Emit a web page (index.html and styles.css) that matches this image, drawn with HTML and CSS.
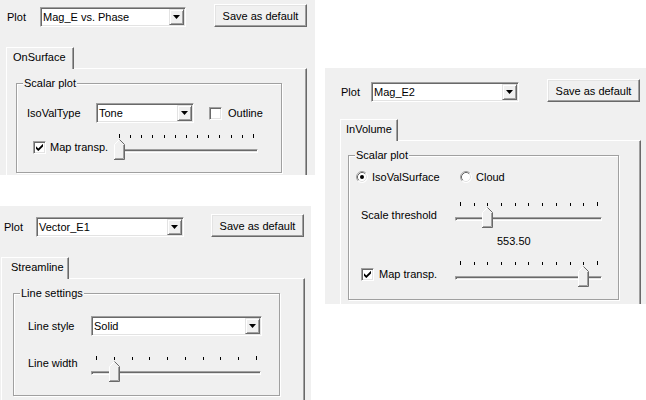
FILE: index.html
```html
<!DOCTYPE html>
<html lang="en">
<head>
<meta charset="utf-8">
<title>Plot settings</title>
<link rel="stylesheet" href="styles.css">
</head>
<body>
<main class="canvas">

  <section class="win win-a">
    <div class="header header-a">
      <span class="plot-label">Plot</span>
      <div class="combo combo-plot">
        <span class="combo-text">Mag_E vs. Phase</span>
        <span class="drop"><svg width="7" height="4" viewBox="0 0 7 4"><polygon points="0,0 7,0 3.5,4" fill="#000"/></svg></span>
      </div>
      <button class="btn">Save as default</button>
    </div>
    <div class="tab tab-a">OnSurface</div>
    <div class="pane pane-a">
      <fieldset class="group group-a">
        <legend>Scalar plot</legend>
        <div class="row row-a1">
          <span class="lbl lbl-iso">IsoValType</span>
          <div class="combo combo-tone">
            <span class="combo-text">Tone</span>
            <span class="drop"><svg width="7" height="4" viewBox="0 0 7 4"><polygon points="0,0 7,0 3.5,4" fill="#000"/></svg></span>
          </div>
          <span class="chk chk-outline"></span>
          <span class="chk-text">Outline</span>
        </div>
        <div class="row row-a2">
          <span class="chk"><svg width="7" height="7" viewBox="0 0 7 7"><polygon points="0,2.2 2.3,4.5 7,-0.2 7,2.4 2.3,7.1 0,4.8" fill="#000"/></svg></span>
          <span class="chk-text lbl-map-a">Map transp.</span>
          <div class="slider slider-a">
            <div class="ticks"><i></i><i></i><i></i><i></i><i></i><i></i><i></i><i></i><i></i><i></i><i></i><i></i><i></i></div>
            <div class="track"></div>
            <svg class="thumb" style="left:0px" width="11" height="21" viewBox="0 0 11 21"><polygon points="0.5,5.5 5.5,0.5 10.5,5.5 10.5,20.5 0.5,20.5" fill="#f0f0f0"/><path d="M0.5 20 V5.5 L5.5 0.5" stroke="#fff" fill="none"/><path d="M5.5 0.5 L10.5 5.5 V20.5 H0" stroke="#696969" fill="none"/><path d="M9.5 6 V19.5 H1" stroke="#a0a0a0" fill="none"/></svg>
          </div>
        </div>
      </fieldset>
    </div>
  </section>

  <section class="win win-b">
    <div class="header header-b">
      <span class="plot-label">Plot</span>
      <div class="combo combo-plot">
        <span class="combo-text">Mag_E2</span>
        <span class="drop"><svg width="7" height="4" viewBox="0 0 7 4"><polygon points="0,0 7,0 3.5,4" fill="#000"/></svg></span>
      </div>
      <button class="btn">Save as default</button>
    </div>
    <div class="tab tab-b">InVolume</div>
    <div class="pane pane-b">
      <fieldset class="group group-b">
        <legend>Scalar plot</legend>
        <div class="row row-b1">
          <span class="opt opt-iso">
            <svg class="radio" width="12" height="12" viewBox="0 0 12 12"><circle cx="6" cy="6" r="5.5" fill="#fff"/><path d="M2.11 9.89 A5.5 5.5 0 0 1 9.89 2.11" stroke="#a0a0a0" fill="none"/><path d="M9.89 2.11 A5.5 5.5 0 0 1 2.11 9.89" stroke="#fff" fill="none"/><path d="M2.82 9.18 A4.5 4.5 0 0 1 9.18 2.82" stroke="#696969" fill="none"/><path d="M9.18 2.82 A4.5 4.5 0 0 1 2.82 9.18" stroke="#e3e3e3" fill="none"/><circle cx="6" cy="6" r="2" fill="#000"/></svg>
            <span class="opt-text">IsoValSurface</span>
          </span>
          <span class="opt">
            <svg class="radio" width="12" height="12" viewBox="0 0 12 12"><circle cx="6" cy="6" r="5.5" fill="#fff"/><path d="M2.11 9.89 A5.5 5.5 0 0 1 9.89 2.11" stroke="#a0a0a0" fill="none"/><path d="M9.89 2.11 A5.5 5.5 0 0 1 2.11 9.89" stroke="#fff" fill="none"/><path d="M2.82 9.18 A4.5 4.5 0 0 1 9.18 2.82" stroke="#696969" fill="none"/><path d="M9.18 2.82 A4.5 4.5 0 0 1 2.82 9.18" stroke="#e3e3e3" fill="none"/></svg>
            <span class="opt-text">Cloud</span>
          </span>
        </div>
        <div class="row row-b2">
          <span class="lbl lbl-thr">Scale threshold</span>
          <div class="slider slider-b">
            <div class="ticks"><i></i><i></i><i></i><i></i><i></i><i></i><i></i><i></i><i></i><i></i><i></i></div>
            <div class="track"></div>
            <svg class="thumb" style="left:27px" width="11" height="21" viewBox="0 0 11 21"><polygon points="0.5,5.5 5.5,0.5 10.5,5.5 10.5,20.5 0.5,20.5" fill="#f0f0f0"/><path d="M0.5 20 V5.5 L5.5 0.5" stroke="#fff" fill="none"/><path d="M5.5 0.5 L10.5 5.5 V20.5 H0" stroke="#696969" fill="none"/><path d="M9.5 6 V19.5 H1" stroke="#a0a0a0" fill="none"/></svg>
          </div>
        </div>
        <div class="row row-b3">553.50</div>
        <div class="row row-b4">
          <span class="chk"><svg width="7" height="7" viewBox="0 0 7 7"><polygon points="0,2.2 2.3,4.5 7,-0.2 7,2.4 2.3,7.1 0,4.8" fill="#000"/></svg></span>
          <span class="chk-text lbl-map-b">Map transp.</span>
          <div class="slider slider-b">
            <div class="ticks"><i></i><i></i><i></i><i></i><i></i><i></i><i></i><i></i><i></i><i></i><i></i></div>
            <div class="track"></div>
            <svg class="thumb" style="left:123px" width="11" height="21" viewBox="0 0 11 21"><polygon points="0.5,5.5 5.5,0.5 10.5,5.5 10.5,20.5 0.5,20.5" fill="#f0f0f0"/><path d="M0.5 20 V5.5 L5.5 0.5" stroke="#fff" fill="none"/><path d="M5.5 0.5 L10.5 5.5 V20.5 H0" stroke="#696969" fill="none"/><path d="M9.5 6 V19.5 H1" stroke="#a0a0a0" fill="none"/></svg>
          </div>
        </div>
      </fieldset>
    </div>
  </section>

  <section class="win win-c">
    <div class="header header-c">
      <span class="plot-label">Plot</span>
      <div class="combo combo-plot">
        <span class="combo-text">Vector_E1</span>
        <span class="drop"><svg width="7" height="4" viewBox="0 0 7 4"><polygon points="0,0 7,0 3.5,4" fill="#000"/></svg></span>
      </div>
      <button class="btn">Save as default</button>
    </div>
    <div class="tab tab-c">Streamline</div>
    <div class="pane pane-c">
      <fieldset class="group group-c">
        <legend>Line settings</legend>
        <div class="row row-c1">
          <span class="lbl lbl-line">Line style</span>
          <div class="combo combo-solid">
            <span class="combo-text">Solid</span>
            <span class="drop"><svg width="7" height="4" viewBox="0 0 7 4"><polygon points="0,0 7,0 3.5,4" fill="#000"/></svg></span>
          </div>
        </div>
        <div class="row row-c2">
          <span class="lbl lbl-line lbl-width">Line width</span>
          <div class="slider slider-c">
            <div class="ticks"><i></i><i></i><i></i><i></i><i></i><i></i><i></i><i></i><i></i><i></i></div>
            <div class="track"></div>
            <svg class="thumb" style="left:18px" width="11" height="21" viewBox="0 0 11 21"><polygon points="0.5,5.5 5.5,0.5 10.5,5.5 10.5,20.5 0.5,20.5" fill="#f0f0f0"/><path d="M0.5 20 V5.5 L5.5 0.5" stroke="#fff" fill="none"/><path d="M5.5 0.5 L10.5 5.5 V20.5 H0" stroke="#696969" fill="none"/><path d="M9.5 6 V19.5 H1" stroke="#a0a0a0" fill="none"/></svg>
          </div>
        </div>
      </fieldset>
    </div>
  </section>

</main>
</body>
</html>
```

FILE: styles.css
```css
html, body {
  margin: 0;
  padding: 0;
}

body {
  background: #ffffff;
  font-family: "Liberation Sans", Arial, sans-serif;
  font-size: 11px;
  color: #000000;
}

.canvas {
  position: relative;
  width: 646px;
  height: 400px;
  overflow: hidden;
}

/* three dialog windows placed on a free canvas */
.win {
  position: absolute;
  background: #f0f0f0;
  overflow: hidden;
  box-sizing: border-box;
}

.win-a { left: 0; top: 0; width: 315px; height: 175px; }
.win-b { left: 325px; top: 68px; width: 321px; height: 236px; }
.win-c { left: 0; top: 206px; width: 311px; height: 194px; }

/* header row: Plot label, combo, button */
.header {
  display: flex;
  align-items: flex-end;
  height: 23px;
}

.header-a { padding: 4px 0 0 7px; }
.header-b { padding: 11px 0 0 16px; }
.header-c { padding: 8px 0 0 4px; }

.plot-label {
  height: 20px;
  line-height: 20px;
  flex: none;
}

.header-a .plot-label { width: 33px; }
.header-b .plot-label { width: 30px; }
.header-c .plot-label { width: 32px; }

.combo {
  display: flex;
  align-items: stretch;
  flex: none;
  height: 20px;
  box-sizing: border-box;
  background: #ffffff;
  border: 1px solid;
  border-color: #a0a0a0 #ffffff #ffffff #a0a0a0;
  box-shadow: inset 1px 1px 0 #696969, inset -1px -1px 0 #e3e3e3;
  padding: 1px;
}

.combo-plot { width: 146px; }
.header-b .combo-plot,
.header-c .combo-plot { width: 148px; }

.combo-text {
  flex: 1;
  line-height: 16px;
  padding-left: 1px;
  white-space: nowrap;
  overflow: hidden;
}

.drop {
  flex: none;
  width: 15px;
  box-sizing: border-box;
  background: #f0f0f0;
  border: 1px solid;
  border-color: #e3e3e3 #696969 #696969 #e3e3e3;
  box-shadow: inset 1px 1px 0 #ffffff, inset -1px -1px 0 #a0a0a0;
  display: flex;
  align-items: center;
  justify-content: center;
}

.drop svg { display: block; }

.btn {
  flex: none;
  width: 93px;
  height: 23px;
  box-sizing: border-box;
  padding: 0;
  margin-left: 28px;
  font: inherit;
  color: #000000;
  background: #f0f0f0;
  border: 1px solid;
  border-color: #ffffff #696969 #696969 #ffffff;
  box-shadow: inset -1px -1px 0 #a0a0a0, inset 1px 1px 0 #e3e3e3;
}

.header-c .btn { margin-left: 27px; }

/* tab + pane */
.tab {
  position: relative;
  box-sizing: border-box;
  height: 22px;
  margin-bottom: -1px;
  background: #f0f0f0;
  border-top: 1px solid #ffffff;
  border-left: 1px solid #ffffff;
  border-right: 1px solid #696969;
  box-shadow: inset -1px 0 0 #a0a0a0;
  line-height: 19px;
  white-space: nowrap;
}

.tab-a { margin-top: 20px; margin-left: 6px; width: 68px; padding-left: 6px; }
.tab-b { margin-top: 17px; margin-left: 15px; width: 58px; padding-left: 5px; }
.tab-c { margin-top: 20px; margin-left: 1px; width: 68px; padding-left: 9px; }

.pane {
  box-sizing: border-box;
  height: 300px;
  border-top: 1px solid #ffffff;
  border-left: 1px solid #ffffff;
  border-right: 1px solid #696969;
  box-shadow: inset -1px 0 0 #a0a0a0;
  padding-top: 8px;
}

.pane-a { margin-left: 6px; width: 301px; }
.pane-b { margin-left: 15px; width: 301px; }
.pane-c { margin-left: 1px; width: 304px; }

/* group boxes */
.group {
  margin: 0;
  padding: 0;
  min-width: 0;
  box-sizing: border-box;
  border: 1px solid #a0a0a0;
  box-shadow: 1px 1px 0 #ffffff, inset 1px 1px 0 #ffffff;
}

.group legend {
  margin-left: 6px;
  padding: 0 1px;
  line-height: 13px;
  background: #f0f0f0;
}

.group-a { margin-left: 9px; width: 266px; padding-bottom: 12px; }
.group-b { margin-left: 7px; width: 271px; padding-bottom: 12px; }
.group-c { margin-left: 11px; width: 267px; padding-bottom: 13px; }

.row {
  display: flex;
  align-items: center;
}

.lbl, .chk-text, .opt-text {
  flex: none;
  white-space: nowrap;
}

/* checkbox */
.chk {
  flex: none;
  width: 13px;
  height: 13px;
  box-sizing: border-box;
  background: #ffffff;
  border: 1px solid;
  border-color: #a0a0a0 #ffffff #ffffff #a0a0a0;
  box-shadow: inset 1px 1px 0 #696969, inset -1px -1px 0 #e3e3e3;
  display: flex;
  align-items: center;
  justify-content: center;
}

.chk svg { display: block; }

.chk-text { margin-left: 4px; }

/* radio */
.opt {
  display: flex;
  align-items: center;
  flex: none;
}

.radio { display: block; flex: none; }
.opt-text { margin-left: 4px; }
.opt-iso { width: 104px; }

/* slider */
.slider {
  position: relative;
  flex: none;
  height: 26px;
}

.ticks {
  display: flex;
  justify-content: space-between;
  align-items: center;
  height: 4px;
  margin: 0 4px 0 5px;
}

.ticks i {
  width: 1px;
  height: 3px;
  background: #000000;
}

.ticks i:first-child,
.ticks i:last-child { height: 4px; }

.track {
  margin-top: 11px;
  height: 4px;
  box-sizing: border-box;
  border-top: 1px solid #a0a0a0;
  border-left: 1px solid #a0a0a0;
  border-bottom: 1px solid #ffffff;
  border-right: 1px solid #ffffff;
  background: #e3e3e3;
  box-shadow: inset 1px 1px 0 #696969;
}

.thumb {
  position: absolute;
  top: 5px;
  display: block;
}

.slider-a { width: 144px; }
.slider-b { width: 147px; }
.slider-c { width: 170px; }

/* panel A rows */
.row-a1 { margin-top: 13px; height: 20px; padding-left: 10px; }
.lbl-iso { width: 69px; }
.combo-tone { width: 98px; }
.chk-outline { margin-left: 15px; }
.row-a1 .chk-text { margin-left: 6px; }

.row-a2 { margin-top: 11px; height: 26px; padding-left: 16px; }
.lbl-map-a { width: 64px; }

/* panel B rows */
.row-b1 { margin-top: 8px; height: 14px; padding-left: 7px; }
.row-b2 { margin-top: 18px; height: 26px; padding-left: 12px; }
.lbl-thr { width: 94px; }
.row-b3 { margin-top: 7px; line-height: 13px; padding-left: 148px; }
.row-b4 { margin-top: 13px; height: 26px; padding-left: 12px; }
.row-b4 .chk-text { margin-left: 5px; }
.lbl-map-b { width: 76px; }

/* panel C rows */
.row-c1 { margin-top: 16px; height: 20px; padding-left: 14px; }
.lbl-line { width: 63px; }
.combo-solid { width: 171px; }
.row-c2 { margin-top: 20px; height: 26px; padding-left: 14px; align-items: flex-start; }
.lbl-width { line-height: 13px; margin-top: 1px; }
```
